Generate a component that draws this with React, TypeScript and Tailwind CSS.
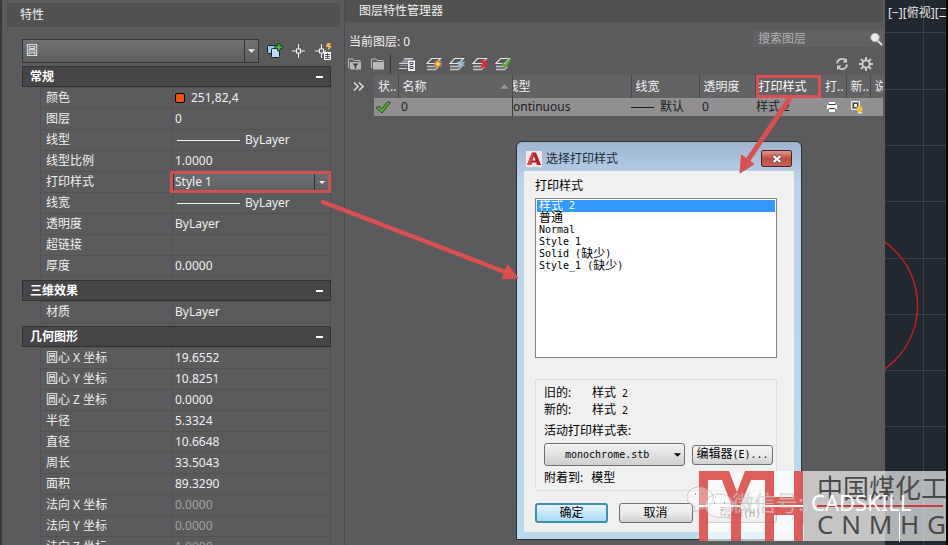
import type { ReactNode } from 'react';

type Item = { label: string; value?: string; line?: boolean; swatch?: boolean; dim?: boolean; select?: boolean };

const general: Item[] = [
  { label: '颜色', value: '251,82,4', swatch: true },
  { label: '图层', value: '0' },
  { label: '线型', value: 'ByLayer', line: true },
  { label: '线型比例', value: '1.0000' },
  { label: '打印样式', value: 'Style 1', select: true },
  { label: '线宽', value: 'ByLayer', line: true },
  { label: '透明度', value: 'ByLayer' },
  { label: '超链接' },
  { label: '厚度', value: '0.0000' },
];

const effects: Item[] = [{ label: '材质', value: 'ByLayer' }];

const geometry: Item[] = [
  { label: '圆心 X 坐标', value: '19.6552' },
  { label: '圆心 Y 坐标', value: '10.8251' },
  { label: '圆心 Z 坐标', value: '0.0000' },
  { label: '半径', value: '5.3324' },
  { label: '直径', value: '10.6648' },
  { label: '周长', value: '33.5043' },
  { label: '面积', value: '89.3290' },
  { label: '法向 X 坐标', value: '0.0000', dim: true },
  { label: '法向 Y 坐标', value: '0.0000', dim: true },
  { label: '法向 Z 坐标', value: '1.0000', dim: true },
];

const Caret = ({ className }: { className: string }) => (
  <svg viewBox="0 0 8 4" className={className}>
    <path d="M0 0h8L4 4z" fill="currentColor" />
  </svg>
);

const Row = ({ item }: { item: Item }) => (
  <tr className="h-[21px]">
    <th scope="row" className="w-[132px] border border-[#525153] p-0 pl-[5px] text-left font-normal">
      {item.label}
    </th>
    <td className={`border border-[#525153] p-0 ${item.dim ? 'text-[#a5a4a6]' : ''}`}>
      {item.select ? (
        <div className="relative -mr-px -ml-[3px] h-5">
          <div className="absolute -top-px flex h-[22px] w-full items-center border-3 border-[#d2504d] bg-linear-to-b from-[#6b6e70] to-[#5f6163]">
            <select
              aria-label={item.label}
              className="h-full w-full appearance-none border-l border-[#333] bg-transparent pl-px outline-none"
            >
              <option>{item.value}</option>
            </select>
            <span className="pointer-events-none absolute top-0 right-0 flex h-full w-[14px] items-center justify-center border-l border-[#333]">
              <Caret className="h-[3px] w-[6px]" />
            </span>
          </div>
        </div>
      ) : (
        <div className="flex items-center pl-[2px]">
          {item.swatch && <span className="mr-[6px] size-[10px] rounded-[2px] border border-black bg-[#fb5204]" />}
          {item.line && <span className="mr-[5px] ml-[2px] h-px w-[63px] bg-[#f0f0f0]" />}
          {item.value}
        </div>
      )}
    </td>
  </tr>
);

const Section = ({ title, items }: { title: string; items: Item[] }) => (
  <section className="mb-[3px] pr-[13px] pl-[22px]">
    <h2 className="flex h-[21px] items-center justify-between border border-[#323133] bg-[#464547] px-[7px] font-bold text-white">
      {title}
      <button aria-label="折叠" className="h-[2px] w-[7px] bg-white" />
    </h2>
    <table className="ml-[18px] w-[calc(100%-18px)] table-fixed border-collapse">
      <tbody>
        {items.map((item) => (
          <Row key={item.label} item={item} />
        ))}
      </tbody>
    </table>
  </section>
);

const Properties = () => (
  <aside className="h-full w-[345px] shrink-0 overflow-hidden border-r border-l-2 border-r-[#4c4b4d] border-l-[#3a3b3d] pt-[3px]">
    <div className="-ml-[2px]">
      <h1 className="mr-1 ml-[7px] flex h-6 items-center bg-[#51514f] pl-[13px]">特性</h1>
      <div className="mt-3 mb-[3px] ml-[22px] flex h-6 items-center">
        <div className="relative h-6 w-[237px] border border-[#333] bg-linear-to-b from-[#707274] to-[#5d5e60]">
          <select aria-label="对象" className="h-full w-full appearance-none bg-transparent pb-px pl-[3px] outline-none">
            <option>圆</option>
          </select>
          <span className="pointer-events-none absolute top-0 right-0 flex h-full w-[14px] items-center justify-center border-l border-[#333]">
            <Caret className="h-[4px] w-[7px]" />
          </span>
        </div>
        <button aria-label="切换 PICKADD" className="ml-2">
          <svg viewBox="0 0 16 16" className="size-4">
            <rect x=".5" y="2.500" width="9" height="8" rx="1" fill="#9dc3e8" stroke="#16222e" />
            <rect x="4.500" y="5.500" width="8" height="9" rx="1" fill="#c3dcf3" stroke="#16222e" />
            <path d="M10.500 .5h2.500v2.500h2.500v2.500H13V8h-2.500V5.500H8V3h2.500z" fill="#44b649" stroke="#124d17" />
          </svg>
        </button>
        <button aria-label="选择对象" className="ml-2">
          <svg viewBox="0 0 16 16" className="size-4" fill="none" stroke="#f2f2f2">
            <path d="M7.500 1v5M7.500 10v5M1 8h4.500M9.500 8H14" />
            <rect x="5.500" y="6" width="4" height="4" />
          </svg>
        </button>
        <button aria-label="快速选择" className="ml-2">
          <svg viewBox="0 0 18 18" className="size-[18px]" fill="none" stroke="#f2f2f2">
            <path d="M6.500 2v5M6.500 11v5M0 9h4.500M8.500 9H11" />
            <rect x="4.500" y="7" width="4" height="4" />
            <path d="M12 1h4l-1 3h2l-4.500 5 1-4H11z" fill="#f5b34a" stroke="none" />
            <path d="M9 10h7v8H9z" fill="#fff" stroke="none" />
            <path d="M10 12.500h5M10 14.500h5M10 16.500h5M12.500 11v6" stroke="#555" />
          </svg>
        </button>
      </div>
    </div>
    <div className="-ml-[2px]">
      <Section title="常规" items={general} />
      <Section title="三维效果" items={effects} />
      <Section title="几何图形" items={geometry} />
    </div>
  </aside>
);

const LayerIcon = ({ children }: { children: ReactNode }) => (
  <svg viewBox="0 0 16 16" className="size-4" fill="none">
    <path d="M1 13.500h8.500l3-3M1 10.500h8.500l3-3" stroke="#c4c4c4" strokeWidth="1.300" />
    <path d="M5.500 2.500h9L10 7.500H1z" fill="#58575a" stroke="#e4e4e4" strokeWidth="1.200" />
    {children}
  </svg>
);

const Folder = ({ filter }: { filter?: boolean }) => (
  <svg viewBox="0 0 16 16" className="size-4">
    <path d="M1.500 12V3h4.500l1 1.500h6V6" fill="none" stroke="#b9b9b9" />
    <path d="M3 6h11v7.500H3z" fill="#b9b9b9" />
    {filter && <path d="M5.500 7.500h6L9.300 10v2.500H7.700V10z" fill="#414042" />}
  </svg>
);

const Toolbar = () => (
  <div className="flex h-[22px] items-center pr-[10px] pl-[2px]">
    <button aria-label="新建特性过滤器"><Folder filter /></button>
    <button aria-label="新建组过滤器" className="ml-[7px]"><Folder /></button>
    <span className="ml-1 h-[18px] w-px bg-[#323133]" />
    <button aria-label="图层状态管理器" className="ml-2">
      <svg viewBox="0 0 16 16" className="size-4" fill="none">
        <path d="M5.500 2.500h8L9 7.500H1z" fill="#8f9192" />
        <path d="M5 2.500h9M0 7.500h9M0 12.500h8" stroke="#d4d4d4" />
        <path d="M1 9.500h8" stroke="#8f9192" />
        <path d="M9 4.500h7V15H9z" fill="#f4f4f4" />
        <path d="M11 6.500h3v2h-3zM11 10.500h3v2h-3z" stroke="#3c4a66" />
      </svg>
    </button>
    <button aria-label="新建图层" className="ml-[11px]">
      <LayerIcon>
        <path d="M12 4v8M8 8h8M9.200 5.200l5.600 5.600M14.800 5.200l-5.600 5.600" stroke="#f19a32" strokeWidth="1.300" />
        <circle cx="12" cy="8" r="1.500" fill="#ffe3a2" />
      </LayerIcon>
    </button>
    <button aria-label="冻结的新图层" className="ml-[7px]">
      <LayerIcon>
        <path d="M12 4v8M8.500 6l7 4M15.500 6l-7 4" stroke="#8ec5dc" strokeWidth="1.500" />
      </LayerIcon>
    </button>
    <button aria-label="删除图层" className="ml-[7px]">
      <LayerIcon>
        <path d="M9.500 4l5 8M14.500 4l-5 8" stroke="#e02b35" strokeWidth="2.400" />
      </LayerIcon>
    </button>
    <button aria-label="置为当前" className="ml-[7px]">
      <LayerIcon>
        <path d="M7.500 7l2.500 3.500L15 3" stroke="#52b531" strokeWidth="2.400" />
      </LayerIcon>
    </button>
    <div className="ml-auto flex items-center gap-[10px]">
      <button aria-label="刷新">
        <svg viewBox="0 0 14 14" className="size-[14px]" fill="none" stroke="#cfcfcf" strokeWidth="1.800">
          <path d="M2 6.500A5 5 0 0 1 11 4M12 7.500A5 5 0 0 1 3 10" />
          <path d="M12 1v4.500H7.500zM2 13V8.500h4.500z" fill="#cfcfcf" stroke="none" />
        </svg>
      </button>
      <button aria-label="设置">
        <svg viewBox="0 0 14 14" className="size-[14px]" fill="none" stroke="#cfcfcf">
          <circle cx="7" cy="7" r="3.600" strokeWidth="1.800" />
          <path d="M7 0v3M7 11v3M0 7h3M11 7h3M2 2l2.200 2.200M9.800 9.800L12 12M12 2L9.800 4.200M4.200 9.800L2 12" strokeWidth="1.900" />
        </svg>
      </button>
    </div>
  </div>
);

const head = 'overflow-hidden border-r border-[#4a494b] p-0 text-left font-normal whitespace-nowrap';
const cell = 'overflow-hidden p-0 whitespace-nowrap';

const LayerTable = () => (
  <table className="w-full table-fixed border-collapse">
    <colgroup>
      <col className="w-6" />
      <col />
      <col className="w-[119px]" />
      <col className="w-[68px]" />
      <col className="w-[56px]" />
      <col className="w-[66px]" />
      <col className="w-[25px]" />
      <col className="w-[24px]" />
      <col className="w-[13px]" />
    </colgroup>
    <thead>
      <tr className="h-[23px] bg-[#636264]">
        <th className={`${head} pl-1`}>状..</th>
        <th className={`${head} pl-1`}>
          <span className="flex items-center justify-between pr-[3px]">
            名称
            <Caret className="h-[5px] w-[9px] rotate-180 text-[#99989a]" />
          </span>
        </th>
        <th className={head}><span className="-ml-[6px]">线型</span></th>
        <th className={`${head} pl-1`}>线宽</th>
        <th className={`${head} pl-1`}>透明度</th>
        <th className={`${head} border-none`}>
          <span className="flex h-[23px] items-center border-3 border-[#d9504e] text-white">打印样式</span>
        </th>
        <th className={`${head} pl-1`}>打..</th>
        <th className={`${head} pl-1`}>新..</th>
        <th className={`${head} border-none pl-1`}>说</th>
      </tr>
    </thead>
    <tbody>
      <tr className="h-[18px] bg-[#918f92] text-[#1d1d1d]">
        <td className={cell}>
          <svg viewBox="0 0 16 14" className="ml-px h-[14px] w-4">
            <path d="M1 8l3-2 2.500 3L13 1.500l2.500 1L7 13z" fill="#56a928" stroke="#245310" />
          </svg>
        </td>
        <td className={`${cell} border-r border-[#3c3b3d] pl-[3px]`}>0</td>
        <td className={cell}><span className="-ml-[7px]">Continuous</span></td>
        <td className={cell}>
          <span className="flex items-center gap-[6px]">
            <span className="h-px w-[23px] bg-[#1d1d1d]" />
            默认
          </span>
        </td>
        <td className={`${cell} pl-[3px]`}>0</td>
        <td className={`${cell} pl-px`}>样式 2</td>
        <td className={cell}>
          <svg viewBox="0 0 12 12" className="ml-[5px] size-3">
            <path d="M3 1h6v2H3zM1 4h10v4H9.500V7h-7v1H1zM3 8h6v3H3z" fill="#fff" />
            <path d="M3 3.500h6M3.500 7.500h5" stroke="#333" />
          </svg>
        </td>
        <td className={cell}>
          <svg viewBox="0 0 14 14" className="ml-1 size-[14px]" fill="none">
            <path d="M1.500 1.500h8v8h-8z" stroke="#eee" />
            <path d="M3.500 3.500h4v4h-4z" fill="#eee" stroke="#444" />
            <circle cx="9.500" cy="9" r="3" fill="#f5c341" />
            <path d="M8 12h4v1.500H8z" fill="#e9e0b5" />
          </svg>
        </td>
        <td className={cell} />
      </tr>
    </tbody>
  </table>
);

const Layers = () => (
  <main className="min-w-0 flex-1 pr-[2px]">
    <h1 className="flex h-[22px] items-center bg-[#51514f] pl-[14px]">图层特性管理器</h1>
    <div className="mt-2 flex h-[23px] items-center justify-between pl-1">
      <p>当前图层: 0</p>
      <label className="mb-[6px] flex h-[17px] w-[130px] items-center bg-[#626163] pl-[5px]">
        <input aria-label="搜索图层" placeholder="搜索图层" className="min-w-0 flex-1 bg-transparent outline-none placeholder:text-[#b0afb1]" />
        <svg viewBox="0 0 14 14" className="size-[14px] shrink-0">
          <path d="M8.500 8.500l4 4" stroke="#ddd" strokeWidth="2" strokeLinecap="round" />
          <circle cx="6" cy="5.500" r="4.200" fill="#ececec" stroke="#b4b4b4" />
        </svg>
      </label>
    </div>
    <Toolbar />
    <div className="flex">
      <button aria-label="展开" className="h-[22px] w-[29px] shrink-0 pl-2">
        <svg viewBox="0 0 11 9" className="h-[9px] w-[11px]" fill="none" stroke="#d6d6d6" strokeWidth="1.600">
          <path d="M1 .5l4 4-4 4M6 .5l4 4-4 4" />
        </svg>
      </button>
      <LayerTable />
    </div>
  </main>
);

const Viewport = () => (
  <div className="w-[63px] shrink-0 overflow-hidden border-r-2 border-black bg-[#212831]">
    <svg className="h-full w-full" fill="none">
      <path
        d="M0 32.500h63M0 89.500h63M0 145.500h63M0 201.500h63M0 258.500h63M0 314.500h63M0 370.500h63M0 426.500h63M38.500 0v545"
        stroke="#3a4049"
      />
      <circle cx="-45" cy="305.500" r="77.600" stroke="#c31d28" strokeWidth="1.500" />
      <text x="3" y="17" fontSize="12" fill="#e6e6e6">[−][俯视][二维线框]</text>
    </svg>
  </div>
);

const Latin = ({ children }: { children: ReactNode }) => (
  <span className="font-['DejaVu_Sans_Mono',monospace] text-[10px] whitespace-pre">{children}</span>
);

const styles: ReactNode[] = [
  <>样式<Latin> 2</Latin></>,
  <>普通</>,
  <Latin>Normal</Latin>,
  <Latin>Style 1</Latin>,
  <><Latin>Solid (</Latin>缺少<Latin>)</Latin></>,
  <><Latin>Style_1 (</Latin>缺少<Latin>)</Latin></>,
];

const button = 'h-5 rounded-[3px] border border-[#707070] bg-linear-to-b from-[#f3f3f3] via-[#ebebeb] to-[#cfcfcf] leading-4';

const PlotStyleDialog = () => (
  <div
    role="dialog"
    aria-label="选择打印样式"
    className="absolute top-[141px] left-[516px] w-[286px] rounded-t-md border border-[#27323d] bg-linear-to-b from-[#9eb5cf] via-[#bcd3ec] via-10% to-[#b8dcee] px-[7px] pb-[7px] text-black"
  >
    <header className="flex h-[29px] items-center pt-1">
      <svg viewBox="0 0 16 16" className="mr-1 ml-[2px] size-4">
        <path d="M0 0h16v16H0z" fill="#f1e7e8" />
        <path d="M6 1.500h4L15 14h-4l-1-2.500H6.500L5 14H1z" fill="#b3202a" />
        <path d="M8 5l1.500 4.500h-3z" fill="#f1e7e8" />
        <path d="M1 14L6 1.500l1.500 1L4.500 14z" fill="#dc4a44" />
      </svg>
      <h2 className="text-[#1d2733]">选择打印样式</h2>
      <button
        aria-label="关闭"
        className="mr-[2px] ml-auto flex h-[17px] w-[31px] items-center justify-center rounded-[2px] border border-[#571d22] bg-linear-to-b from-[#dc9a92] via-[#c14b42] to-[#c9655a]"
      >
        <svg viewBox="0 0 12 10" className="h-[10px] w-3">
          <path d="M2 1.500l8 7M10 1.500l-8 7" stroke="#555" strokeWidth="3.600" />
          <path d="M2.500 2l7 6M9.500 2l-7 6" stroke="#fff" strokeWidth="2.200" />
        </svg>
      </button>
    </header>
    <div className="bg-[#f0f0f0] pt-[5px] pr-[17px] pb-[9px] pl-[11px]">
      <p className="h-[22px] leading-5">打印样式</p>
      <ul role="listbox" aria-label="打印样式" className="h-40 border border-[#7d8288] bg-white p-px">
        {styles.map((style, i) => (
          <li
            key={i}
            role="option"
            aria-selected={i === 0}
            className={`flex h-3 items-center pl-[2px] leading-3 ${i === 0 ? 'bg-[#3399fe] text-white' : ''}`}
          >
            {style}
          </li>
        ))}
      </ul>
      <div className="mt-[21px] rounded-[3px] border border-[#dcdcdc] pt-1 pr-[3px] pl-2">
        <dl className="grid auto-rows-[17px] grid-cols-[48px_1fr] leading-[17px]">
          <dt>旧的:</dt>
          <dd>样式<Latin> 2</Latin></dd>
          <dt>新的:</dt>
          <dd>样式<Latin> 2</Latin></dd>
        </dl>
        <label htmlFor="table" className="mt-[3px] block h-5 leading-5">活动打印样式表:</label>
        <div className="mt-[2px] flex items-center justify-between">
          <div className="relative w-[141px]">
            <select id="table" className="block h-[23px] w-full appearance-none rounded-[3px] border border-[#707070] bg-linear-to-b from-[#f3f3f3] to-[#cfcfcf] pl-5 font-['DejaVu_Sans_Mono',monospace] text-[10px]">
              <option>monochrome.stb</option>
            </select>
            <Caret className="pointer-events-none absolute top-[10px] right-1 h-1 w-[7px]" />
          </div>
          <button className={`${button} w-[81px]`}>编辑器<Latin>(E)...</Latin></button>
        </div>
        <p className="flex h-6 items-center gap-2"><span>附着到:</span>模型</p>
      </div>
      <div className="mt-3 flex justify-between">
        <button className="h-5 w-[73px] rounded-[3px] border-2 border-[#3f8fae] bg-linear-to-b from-[#e3f4fc] to-[#a9dbf2] leading-4">
          确定
        </button>
        <button className={`${button} w-[74px]`}>取消</button>
        <button className={`${button} w-[74px]`}>帮助<Latin>(H)</Latin></button>
      </div>
    </div>
  </div>
);

const Arrows = () => (
  <svg viewBox="0 0 948 545" className="pointer-events-none absolute top-0 left-0 h-[545px] w-[948px]">
    <g fill="#d9504e" stroke="#d9504e">
      <path d="M323 202l182 70" strokeWidth="4.500" strokeLinecap="round" />
      <path d="M518 278l-16 1 5.500-14.500z" strokeWidth="1" />
      <path d="M790 98l-42 62" strokeWidth="5" />
      <path d="M740 173l1.500-18 12.500 9z" strokeWidth="1" />
    </g>
  </svg>
);

const Watermark = () => (
  <div className="absolute top-[471px] left-[699px] flex h-[70px] w-[247px] bg-white/65">
    <svg viewBox="0 0 105 70" className="h-[70px] w-[105px]">
      <path d="M75 53h30v17H75z" fill="#fff" fillOpacity=".6" />
      <g fill="#dc4843" fillOpacity=".88">
        <path d="M0 0h30l8 21L46 0h29v70H66V9H52L42 33v37H32V33L23 9H9v61H0z" />
        <path d="M75 26h20V0h9v70h-9V44H75z" />
      </g>
      <path d="M0 35h104" stroke="#fff" strokeWidth="2" />
    </svg>
    <div className="flex-1 overflow-hidden pl-[13px] text-[#4a4a4a]">
      <p className="h-[34px] text-[26px] leading-[34px] whitespace-nowrap">中国煤化工</p>
      <div className="mr-[3px] h-[2px] bg-[#d03a3c]" />
      <p className="flex h-[34px] items-center justify-between text-[26px] leading-[34px]">
        {'CNMHG'.split('').map((letter) => (
          <span key={letter}>{letter}</span>
        ))}
      </p>
    </div>
    <svg viewBox="0 0 260 75" className="absolute -top-1 -left-3 h-[75px] w-[260px]">
      <g fill="#fff" fillOpacity=".35" stroke="#999" strokeOpacity=".6" strokeWidth=".8">
        <path d="M12 20c8 0 14 5 14 11 0 7-6 11-12 11l-7 3 1-5c-5-2-8-5-8-9 0-6 5-11 12-11z" />
        <path d="M32 27c9 0 15 5 15 12 0 4-2 7-5 9l1 4-5-2c-12 2-20-4-20-11s6-12 14-12z" />
      </g>
      <path d="M8 27h1M15 27h1M27 36h1M37 36h1" stroke="#888" strokeWidth="1.500" />
      <path d="M212.500 45v30" stroke="#fff" />
    </svg>
    <p className="absolute top-[17px] left-[33px] text-[22px] leading-7 whitespace-nowrap text-white/40 [text-shadow:0_0_1px_#8888]">
      微信号:
    </p>
    <p className="absolute top-[17px] left-[112px] text-[22px] leading-7 text-white">CADSKILL</p>
  </div>
);

const App = () => {
  return (
    <div className="relative flex h-screen overflow-hidden bg-[#5b5a5c] font-['Noto_Sans','Noto_Sans_CJK_SC',sans-serif] text-[12px] leading-4 text-[#f0f0f0]">
      <Properties />
      <Layers />
      <Viewport />
      <PlotStyleDialog />
      <Arrows />
      <Watermark />
    </div>
  );
};

export default App;
